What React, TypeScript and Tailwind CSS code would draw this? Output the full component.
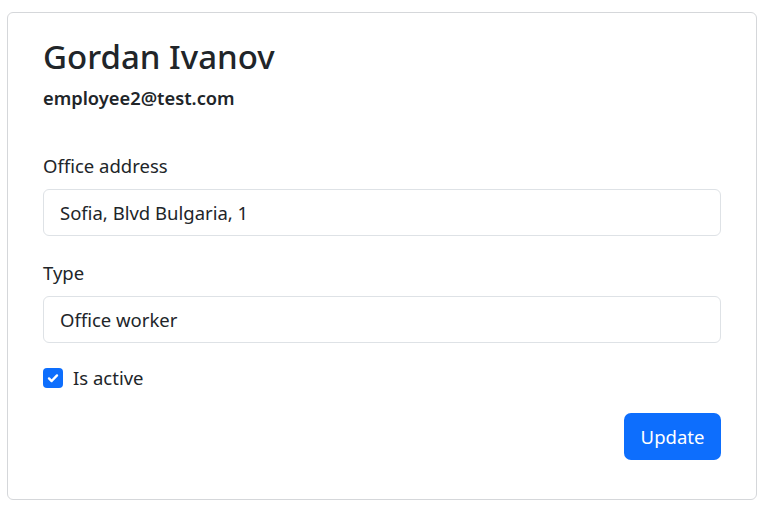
import React from "react";

export default function App() {
  return (
    <div className="w-[766px] h-[511px] bg-white pt-[12px] pl-[7px]" style={{ fontFamily: '"Noto Sans", sans-serif' }}>
      <div className="w-[750px] h-[488px] border border-[#d5d7da] rounded-[6px] px-[35px] pt-[22px] text-[#212529]">
        <h1 className="text-[33px] leading-[44px] font-medium">Gordan Ivanov</h1>
        <div className="text-[18.3px] font-semibold mt-[6px] leading-[26px]">employee2@test.com</div>
        <div className="mt-[42px] text-[18.5px] leading-[26px]">Office address</div>
        <div className="mt-[10px] h-[47px] border border-[#dee2e6] rounded-[6px] px-[16px] flex items-center text-[18.5px]">
          Sofia, Blvd Bulgaria, 1
        </div>
        <div className="mt-[24px] text-[18.5px] leading-[26px]">Type</div>
        <div className="mt-[10px] h-[47px] border border-[#dee2e6] rounded-[6px] px-[16px] flex items-center text-[18.5px]">
          Office worker
        </div>
        <div className="mt-[22px] flex items-center gap-[10px]">
          <div className="w-[20px] h-[20px] rounded-[4px] bg-[#0d6efd] flex items-center justify-center">
            <svg width="16" height="16" viewBox="0 0 20 20">
              <path d="M5 10.5l3.3 3.3 6.7-7" fill="none" stroke="#fff" strokeWidth="3" strokeLinecap="round" strokeLinejoin="round" />
            </svg>
          </div>
          <span className="text-[18.5px] leading-[26px]">Is active</span>
        </div>
        <div className="flex justify-end mt-[22px]">
          <button className="w-[97px] h-[47px] bg-[#0d6efd] text-white rounded-[7px] text-[18.5px]">Update</button>
        </div>
      </div>
    </div>
  );
}
